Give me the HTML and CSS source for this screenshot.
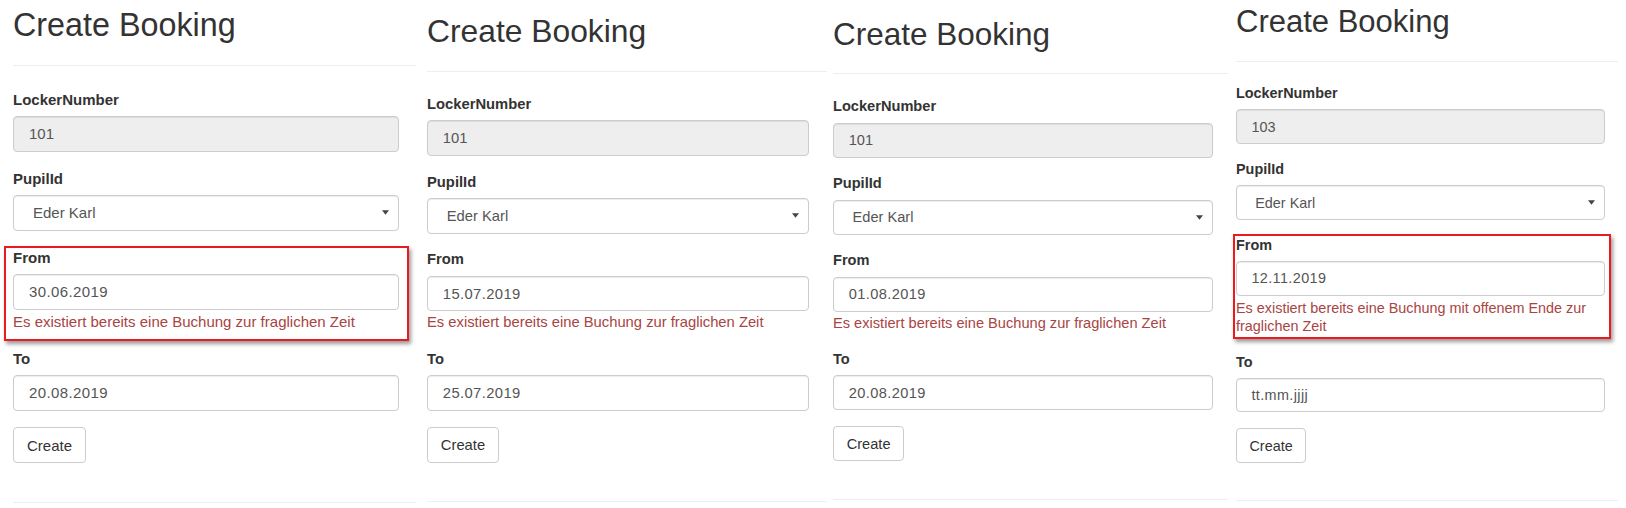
FILE: index.html
```html
<!DOCTYPE html>
<html lang="de">
<head>
<meta charset="utf-8">
<title>Create Booking</title>
<link rel="stylesheet" href="styles.css">
</head>
<body>
<main class="shots">

  <section class="panel p1">
    <h2 class="title">Create Booking</h2>
    <hr class="rule">
    <form class="form">
      <div class="group">
        <label class="label">LockerNumber</label>
        <input class="control" type="text" value="101" disabled>
      </div>
      <div class="group">
        <label class="label">PupilId</label>
        <div class="control select"><span>Eder Karl</span><svg class="caret" viewBox="0 0 8 5" width="7" height="5"><path d="M0 0h8L4 5z"/></svg></div>
      </div>
      <div class="group marked">
        <label class="label">From</label>
        <input class="control date" type="text" value="30.06.2019">
        <span class="error">Es existiert bereits eine Buchung zur fraglichen Zeit</span>
      </div>
      <div class="group last">
        <label class="label">To</label>
        <input class="control date" type="text" value="20.08.2019">
      </div>
      <div class="actions"><button class="btn" type="button">Create</button></div>
    </form>
    <hr class="rule bottom">
  </section>

  <section class="panel p2">
    <h2 class="title">Create Booking</h2>
    <hr class="rule">
    <form class="form">
      <div class="group">
        <label class="label">LockerNumber</label>
        <input class="control" type="text" value="101" disabled>
      </div>
      <div class="group">
        <label class="label">PupilId</label>
        <div class="control select"><span>Eder Karl</span><svg class="caret" viewBox="0 0 8 5" width="7" height="5"><path d="M0 0h8L4 5z"/></svg></div>
      </div>
      <div class="group">
        <label class="label">From</label>
        <input class="control date" type="text" value="15.07.2019">
        <span class="error">Es existiert bereits eine Buchung zur fraglichen Zeit</span>
      </div>
      <div class="group last">
        <label class="label">To</label>
        <input class="control date" type="text" value="25.07.2019">
      </div>
      <div class="actions"><button class="btn" type="button">Create</button></div>
    </form>
    <hr class="rule bottom">
  </section>

  <section class="panel p3">
    <h2 class="title">Create Booking</h2>
    <hr class="rule">
    <form class="form">
      <div class="group">
        <label class="label">LockerNumber</label>
        <input class="control" type="text" value="101" disabled>
      </div>
      <div class="group">
        <label class="label">PupilId</label>
        <div class="control select"><span>Eder Karl</span><svg class="caret" viewBox="0 0 8 5" width="7" height="5"><path d="M0 0h8L4 5z"/></svg></div>
      </div>
      <div class="group">
        <label class="label">From</label>
        <input class="control date" type="text" value="01.08.2019">
        <span class="error">Es existiert bereits eine Buchung zur fraglichen Zeit</span>
      </div>
      <div class="group last">
        <label class="label">To</label>
        <input class="control date" type="text" value="20.08.2019">
      </div>
      <div class="actions"><button class="btn" type="button">Create</button></div>
    </form>
    <hr class="rule bottom">
  </section>

  <section class="panel p4">
    <h2 class="title">Create Booking</h2>
    <hr class="rule">
    <form class="form">
      <div class="group">
        <label class="label">LockerNumber</label>
        <input class="control" type="text" value="103" disabled>
      </div>
      <div class="group">
        <label class="label">PupilId</label>
        <div class="control select"><span>Eder Karl</span><svg class="caret" viewBox="0 0 8 5" width="7" height="5"><path d="M0 0h8L4 5z"/></svg></div>
      </div>
      <div class="group marked">
        <label class="label">From</label>
        <input class="control date" type="text" value="12.11.2019">
        <span class="error">Es existiert bereits eine Buchung mit offenem Ende zur fraglichen Zeit</span>
      </div>
      <div class="group last">
        <label class="label">To</label>
        <input class="control date" type="text" value="tt.mm.jjjj">
      </div>
      <div class="actions"><button class="btn" type="button">Create</button></div>
    </form>
    <hr class="rule bottom">
  </section>

</main>
</body>
</html>
```

FILE: styles.css
```css
* {
  box-sizing: border-box;
}

html,
body {
  margin: 0;
  padding: 0;
  background: #fff;
}

body {
  width: 1626px;
  height: 508px;
  overflow: hidden;
  font-family: "Liberation Sans", Arial, Helvetica, sans-serif;
  color: #333;
}

.shots {
  display: grid;
  grid-template-columns: 416px 411px 401px 398px;
  height: 508px;
}

.panel {
  --s: 1;
  display: flex;
  flex-direction: column;
  min-width: 0;
  padding-top: var(--pt);
  padding-left: var(--pl);
  padding-right: var(--pr, 0px);
}

.p1 { --s: 1;    --pt: 7px;    --pl: 13px; --fw: 386px; --bl: -9px; --br: -10px; --bt: -2.5px; --bb: -9.5px; }
.p2 { --s: .985; --pt: 13.5px; --pl: 11px; --fw: 382px; }
.p3 { --s: .975; --pt: 16.8px; --pl: 6px;  --fw: 380px; }
.p4 { --s: .96;  --pt: 5.3px;  --pl: 8px;  --pr: 8px; --fw: 369px; --bl: -3px; --br: -6px; --bt: -3px; --bb: -2.5px; }

.title {
  margin: 0;
  font-weight: 400;
  font-size: calc(32.3px * var(--s));
  line-height: calc(36px * var(--s));
  color: #333;
}

.rule {
  height: 0;
  margin: calc(22px * var(--s)) 0 calc(24.5px * var(--s));
  border: 0;
  border-top: 1px solid #eee;
}

.rule.bottom {
  margin: calc(39px * var(--s)) 0 0;
}

.form {
  width: var(--fw);
  margin: 0;
}

.group {
  position: relative;
  margin-bottom: calc(18px * var(--s));
}

.group.last {
  margin-bottom: calc(16.5px * var(--s));
}

.marked::after {
  content: "";
  position: absolute;
  left: var(--bl);
  right: var(--br);
  top: var(--bt);
  bottom: var(--bb);
  border: 2px solid #ea1a1f;
  box-shadow: 2px 3px 4px rgba(0, 0, 0, .4);
  pointer-events: none;
}

.label {
  display: block;
  margin-bottom: calc(7px * var(--s));
  font-weight: 700;
  font-size: calc(15px * var(--s));
  line-height: calc(18px * var(--s));
  color: #333;
}

.control {
  display: block;
  width: 100%;
  height: calc(36px * var(--s));
  margin: 0;
  padding: 0 calc(15px * var(--s));
  font-family: inherit;
  font-size: calc(15px * var(--s));
  color: #555;
  background: #fff;
  border: 1px solid #ccc;
  border-radius: 4px;
  box-shadow: inset 0 1px 1px rgba(0, 0, 0, .075);
  outline: none;
}

.control[disabled] {
  background: #eee;
  opacity: 1;
  -webkit-text-fill-color: #555;
}

.date {
  letter-spacing: .4px;
}

.select {
  display: flex;
  align-items: center;
  justify-content: space-between;
  padding-left: calc(19px * var(--s));
  padding-right: calc(9px * var(--s));
}

.caret {
  fill: #444;
}

.error {
  display: block;
  margin-top: calc(2px * var(--s));
  font-size: calc(15px * var(--s));
  line-height: calc(20px * var(--s));
  color: #a94442;
}

.p4 .error {
  margin-top: 3px;
  line-height: 18px;
  padding-bottom: 2px;
}

.actions {
  display: flex;
}

.btn {
  height: calc(36px * var(--s));
  margin: 0;
  padding: 0 calc(13px * var(--s));
  font-family: inherit;
  font-size: calc(15px * var(--s));
  color: #333;
  background: #fff;
  border: 1px solid #ccc;
  border-radius: 4px;
  cursor: pointer;
}
```
